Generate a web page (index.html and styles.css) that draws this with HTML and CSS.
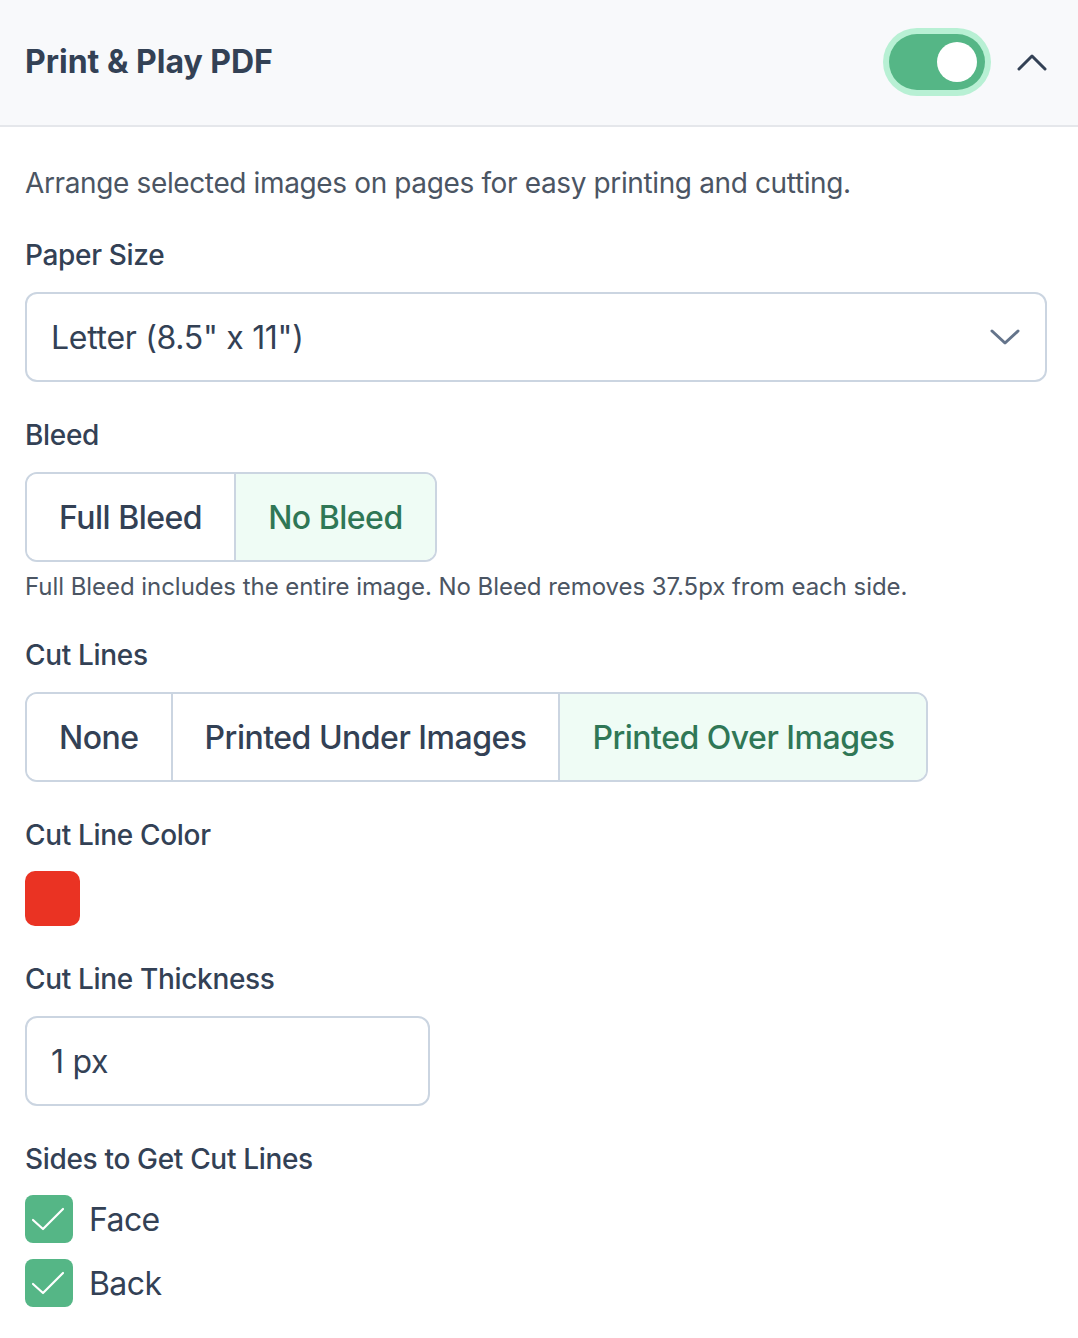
FILE: index.html
```html
<!DOCTYPE html>
<html lang="en">
<head>
<meta charset="utf-8">
<title>Print &amp; Play PDF</title>
<link rel="stylesheet" href="styles.css">
</head>
<body>
<section class="panel">
  <header class="panel-header">
    <h2 class="panel-title">Print &amp; Play PDF</h2>
    <div class="header-actions">
      <div class="toggle"><span class="knob"></span></div>
      <svg class="chev-up" width="30" height="18" viewBox="0 0 30 18"><path d="M2 16 L15 3 L28 16" fill="none" stroke="#334155" stroke-width="3" stroke-linecap="round" stroke-linejoin="round"/></svg>
    </div>
  </header>
  <div class="panel-body">
    <p class="desc">Arrange selected images on pages for easy printing and cutting.</p>

    <div class="field first">
      <div class="label">Paper Size</div>
      <div class="select">
        <span class="select-text">Letter (8.5" x 11")</span>
        <svg class="chev-down" width="30" height="20" viewBox="0 0 30 20"><path d="M2 4 L15 16 L28 4" fill="none" stroke="#64748b" stroke-width="3" stroke-linecap="round" stroke-linejoin="round"/></svg>
      </div>
    </div>

    <div class="field">
      <div class="label">Bleed</div>
      <div class="seg">
        <div class="seg-btn">Full Bleed</div>
        <div class="seg-btn active">No Bleed</div>
      </div>
      <p class="help">Full Bleed includes the entire image. No Bleed removes 37.5px from each side.</p>
    </div>

    <div class="field field-after-help">
      <div class="label">Cut Lines</div>
      <div class="seg">
        <div class="seg-btn">None</div>
        <div class="seg-btn">Printed Under Images</div>
        <div class="seg-btn active">Printed Over Images</div>
      </div>
    </div>

    <div class="field">
      <div class="label label-tight">Cut Line Color</div>
      <div class="swatch"></div>
    </div>

    <div class="field">
      <div class="label">Cut Line Thickness</div>
      <div class="input">1 px</div>
    </div>

    <div class="field">
      <div class="label label-tight">Sides to Get Cut Lines</div>
      <div class="checks">
        <label class="check">
          <span class="box"><svg width="48" height="48" viewBox="0 0 48 48"><path d="M8 25 L18 34 L38 14" fill="none" stroke="#fff" stroke-width="2.2" stroke-linecap="round" stroke-linejoin="round"/></svg></span>
          <span class="check-text">Face</span>
        </label>
        <label class="check">
          <span class="box"><svg width="48" height="48" viewBox="0 0 48 48"><path d="M8 25 L18 34 L38 14" fill="none" stroke="#fff" stroke-width="2.2" stroke-linecap="round" stroke-linejoin="round"/></svg></span>
          <span class="check-text">Back</span>
        </label>
      </div>
    </div>
  </div>
</section>
</body>
</html>
```
FILE: styles.css
```css
* { box-sizing: border-box; }
html, body { margin: 0; padding: 0; background: #ffffff; }
body {
  font-family: Inter, "Noto Sans", "Liberation Sans", sans-serif;
  color: #334155;
}
.panel { width: 1078px; }
.panel-header {
  height: 127px;
  background: #f8f9fb;
  border-bottom: 2px solid #e5e7eb;
  display: flex;
  align-items: center;
  justify-content: space-between;
  padding: 0 31px 2px 25px;
}
.panel-title {
  margin: 0;
  font-size: 32px;
  font-weight: 700;
  color: #334155;
  letter-spacing: 0;
}
.header-actions {
  display: flex;
  align-items: center;
  gap: 32px;
}
.toggle {
  width: 96px;
  height: 56px;
  border-radius: 28px;
  background: #55b686;
  box-shadow: 0 0 0 6px #b8f0d4;
  display: flex;
  align-items: center;
  justify-content: flex-end;
  padding-right: 8px;
}
.knob {
  width: 40px;
  height: 40px;
  border-radius: 50%;
  background: #ffffff;
}
.chev-up { display: block; }
.panel-body { padding: 36px 31px 40px 25px; }
.desc {
  margin: 0;
  font-size: 28px;
  line-height: 40px;
  color: #4b5563;
  letter-spacing: -0.37px;
}
.field { margin-top: 33px; }
.field.first { margin-top: 32px; }
.field.field-after-help { margin-top: 31px; }
.label {
  font-size: 28px;
  line-height: 40px;
  font-weight: 500;
  color: #334155;
  margin-bottom: 17px;
  letter-spacing: -0.33px;
}
.label.label-tight { margin-bottom: 16px; }
.select {
  height: 90px;
  border: 2px solid #cbd5e1;
  border-radius: 12px;
  display: flex;
  align-items: center;
  justify-content: space-between;
  padding: 0 25px 0 24px;
  font-size: 32px;
  color: #334155;
}
.select-text { letter-spacing: -0.3px; }
.chev-down { display: block; }
.seg {
  display: inline-flex;
  height: 90px;
  border: 2px solid #cbd5e1;
  border-radius: 12px;
  overflow: hidden;
}
.seg-btn {
  display: flex;
  align-items: center;
  padding: 0 32px 0 32px;
  font-size: 32px;
  font-weight: 500;
  color: #334155;
  background: #ffffff;
  letter-spacing: -0.5px;
}
.seg-btn + .seg-btn { border-left: 2px solid #cbd5e1; }
.seg-btn.active {
  background: #effcf5;
  color: #2f7756;
}
.help {
  margin: 8px 0 0;
  font-size: 24px;
  line-height: 34px;
  color: #4b5563;
  letter-spacing: -0.05px;
}
.swatch {
  width: 55px;
  height: 55px;
  border-radius: 10px;
  background: #ea3323;
}
.input {
  width: 405px;
  height: 90px;
  border: 2px solid #cbd5e1;
  border-radius: 12px;
  display: flex;
  align-items: center;
  padding: 0 24px;
  font-size: 32px;
  color: #334155;
  letter-spacing: -0.3px;
}
.checks {
  display: flex;
  flex-direction: column;
  gap: 16px;
}
.check {
  display: flex;
  align-items: center;
  gap: 16px;
}
.box {
  width: 48px;
  height: 48px;
  border-radius: 8px;
  background: #55b686;
  display: block;
}
.box svg { display: block; }
.check-text {
  font-size: 32px;
  color: #334155;
  letter-spacing: -0.6px;
}
```
